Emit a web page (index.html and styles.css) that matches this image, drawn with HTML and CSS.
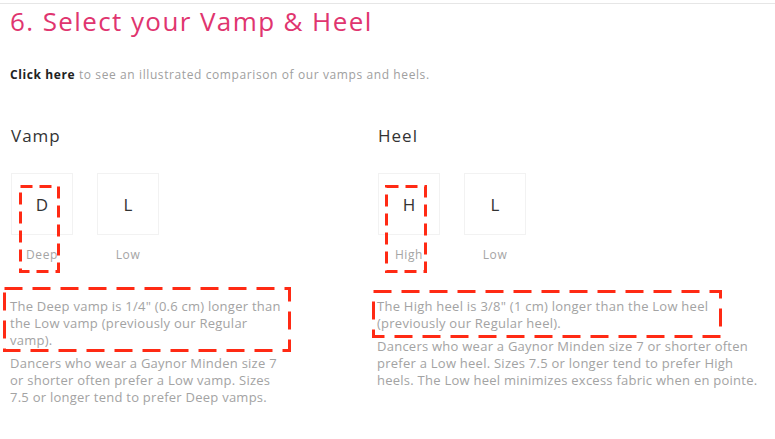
FILE: index.html
```html
<!DOCTYPE html>
<html lang="en">
<head>
  <meta charset="UTF-8" />
  <title>Select your Vamp &amp; Heel</title>
  <link rel="stylesheet" href="styles.css">
</head>
<body>
  <div class="page">
    <h1>6. Select your Vamp &amp; Heel</h1>
    <p class="intro"><a href="#">Click here</a> to see an illustrated comparison of our vamps and heels.</p>

    <div class="columns">
      <section class="col col-vamp">
        <h2>Vamp</h2>
        <div class="options">
          <div class="option">
            <div class="box">D</div>
            <span class="label">Deep</span>
          </div>
          <div class="option">
            <div class="box">L</div>
            <span class="label">Low</span>
          </div>
        </div>
        <div class="text">
          <p>The Deep vamp is 1/4" (0.6 cm) longer than the Low vamp (previously our Regular vamp).</p>
          <p>Dancers who wear a Gaynor Minden size 7 or shorter often prefer a Low vamp. Sizes 7.5 or longer tend to prefer Deep vamps.</p>
        </div>
      </section>

      <section class="col col-heel">
        <h2>Heel</h2>
        <div class="options">
          <div class="option">
            <div class="box">H</div>
            <span class="label">High</span>
          </div>
          <div class="option">
            <div class="box">L</div>
            <span class="label">Low</span>
          </div>
        </div>
        <div class="text">
          <p>The High heel is 3/8" (1 cm) longer than the Low heel (previously our Regular heel).</p>
          <p>Dancers who wear a Gaynor Minden size 7 or shorter often prefer a Low heel. Sizes 7.5 or longer tend to prefer High heels. The Low heel minimizes excess fabric when en pointe.</p>
        </div>
      </section>
    </div>

    <!-- annotation marks -->
    <svg class="mark mark-deep" width="41" height="88">
      <rect x="1.5" y="1.5" width="38" height="85" stroke-dasharray="12 7" />
    </svg>
    <svg class="mark mark-high" width="42" height="88">
      <rect x="1.5" y="1.5" width="39" height="85" stroke-dasharray="12 7" />
    </svg>
    <svg class="mark mark-vamp-text" width="288" height="65">
      <rect x="1.5" y="1.5" width="285" height="62" stroke-dasharray="18 10" />
    </svg>
    <svg class="mark mark-heel-text" width="350" height="48">
      <rect x="1.5" y="1.5" width="347" height="45" stroke-dasharray="18 10" />
    </svg>
  </div>
</body>
</html>
```

FILE: styles.css
```css
* {
  box-sizing: border-box;
  margin: 0;
  padding: 0;
}

body {
  background: #fff;
  font-family: 'Open Sans', 'Liberation Sans', sans-serif;
  color: #999;
}

.page {
  position: relative;
  width: 775px;
  height: 436px;
  overflow: hidden;
  border-top: 1px solid #e6e6e6;
  margin-top: 3px;
  padding: 0 10px;
}

h1 {
  font-weight: 400;
  font-size: 26px;
  line-height: 32px;
  color: #e0356f;
  letter-spacing: 1.4px;
  margin-top: 1px;
}

.intro {
  margin-top: 30px;
  font-size: 12px;
  line-height: 16px;
  color: #a0a0a0;
  letter-spacing: 0.6px;
}

.intro a {
  color: #222;
  font-weight: 700;
  text-decoration: none;
}

.columns {
  display: flex;
  margin-top: 42px;
}

.col {
  width: 367px;
}

h2 {
  font-weight: 400;
  font-size: 17px;
  line-height: 22px;
  color: #333;
  letter-spacing: 1px;
  padding-left: 1px;
}

.options {
  display: flex;
  gap: 24px;
  margin-top: 26px;
  padding-left: 1px;
}

.option {
  display: flex;
  flex-direction: column;
  align-items: center;
  width: 62px;
}

.box {
  width: 62px;
  height: 62px;
  border: 1px solid #f2f2f2;
  display: flex;
  align-items: center;
  justify-content: center;
  font-size: 17px;
  color: #333;
}

.label {
  margin-top: 12px;
  font-size: 12px;
  line-height: 16px;
  color: #a5a5a5;
  letter-spacing: 0.6px;
}

.text {
  margin-top: 35px;
  font-size: 13px;
  line-height: 17px;
  color: #a3a3a3;
  letter-spacing: 0.25px;
}

.text p + p {
  margin-top: 6px;
}

.col-vamp .text {
  width: 280px;
}

.col-heel .text {
  width: 385px;
}

/* marcas vermelhas tracejadas */
.mark {
  position: absolute;
  fill: none;
  stroke: #ff2a14;
  stroke-width: 3;
}

.mark-deep {
  left: 19px;
  top: 181px;
}

.mark-high {
  left: 385px;
  top: 181px;
}

.mark-vamp-text {
  left: 3px;
  top: 283px;
}

.mark-heel-text {
  left: 372px;
  top: 286px;
}
```
